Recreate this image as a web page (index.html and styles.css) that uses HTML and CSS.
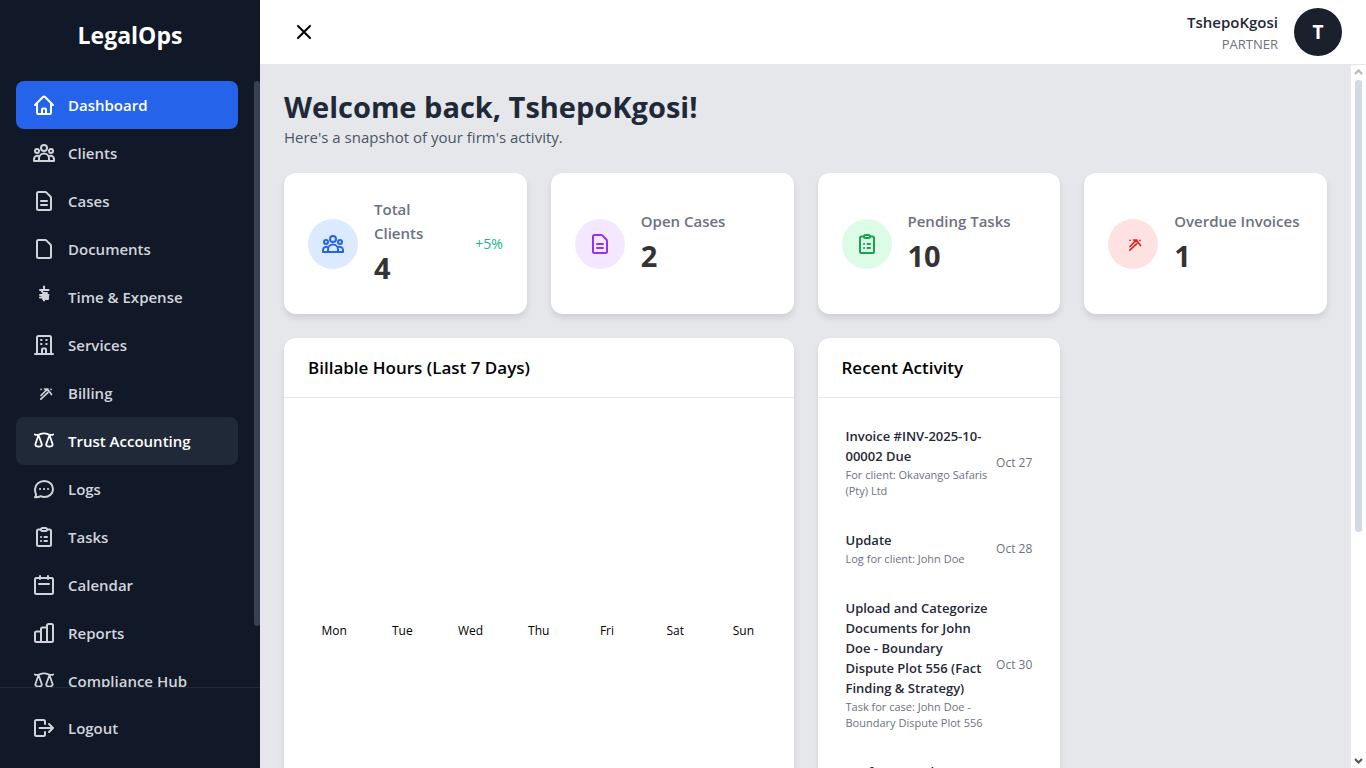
FILE: index.html
```html
<!DOCTYPE html>
<html lang="en">
<head>
  <meta charset="UTF-8">
  <title>LegalOps</title>
  <meta name="viewport" content="width=device-width, initial-scale=1.0">
  <link rel="stylesheet" href="styles.css">
</head>
<body>

<svg class="sprite" aria-hidden="true">
  <symbol id="i-home" viewBox="0 0 24 24"><path d="M3 12 11.200 3.800a1.100 1.100 0 0 1 1.600 0L21 12M5 10.500V20a1 1 0 0 0 1 1h12a1 1 0 0 0 1-1v-9.500M10 21v-4.500a1 1 0 0 1 1-1h2a1 1 0 0 1 1 1V21"/></symbol>
  <symbol id="i-users" viewBox="0 0 24 24"><circle cx="12" cy="7" r="3"/><circle cx="5" cy="10" r="2"/><circle cx="19" cy="10" r="2"/><path d="M7 20v-2.500a5 5 0 0 1 10 0V20M7.200 15.300A3.400 3.400 0 0 0 2 18v2h20v-2a3.400 3.400 0 0 0-5.200-2.700"/></symbol>
  <symbol id="i-case" viewBox="0 0 24 24"><path d="M6.500 3h6.600a2 2 0 0 1 1.400.6l3.900 3.900a2 2 0 0 1 .6 1.400v10.600a1.500 1.500 0 0 1-1.500 1.500h-11a1.500 1.500 0 0 1-1.500-1.500v-15A1.500 1.500 0 0 1 6.500 3ZM9 12h6M9 16h6"/></symbol>
  <symbol id="i-doc" viewBox="0 0 24 24"><path d="M6.500 3h6.600a2 2 0 0 1 1.400.6l3.900 3.900a2 2 0 0 1 .6 1.400v10.600a1.500 1.500 0 0 1-1.500 1.500h-11a1.500 1.500 0 0 1-1.500-1.500v-15A1.500 1.500 0 0 1 6.500 3Z"/></symbol>
  <symbol id="i-time" viewBox="0 0 24 24"><path d="M12 1.500v2M8 5h8.500M9.500 5.500l1.500 2.500h4M8 10h8.500M8 12.500h2M10 10.500h6v3.500h-5M10.500 12.500h4M12 13v2.500M15.500 14h-2"/></symbol>
  <symbol id="i-building" viewBox="0 0 24 24"><path d="M3 21h18M5 21V4.500A1.500 1.500 0 0 1 6.500 3h11A1.500 1.500 0 0 1 19 4.500V21M10 21v-4.500a1 1 0 0 1 1-1h2a1 1 0 0 1 1 1V21M9 7h.5M14.200 7h.5M9 11h.5M14.200 11h.5"/></symbol>
  <symbol id="i-billing" viewBox="0 0 24 24"><path stroke-width="1.700" d="m8.800 18.200 7-6.500M9 14.500l4.500-4.500M12.500 8h3.500M13.500 9.500h3l3 4M9 8.300h.1M19 8.300h.1"/></symbol>
  <symbol id="i-scale" viewBox="0 0 24 24"><path stroke-width="1.800" d="M2.800 5.500c1.600.8 3.200.5 4.800-.2 2.600-1 6.200-1 8.800 0 1.600.7 3.200 1 4.800.2M6.500 6 3.300 15.500c.2 2.700 6.400 2.700 6.600 0L6.500 6M17.500 6l-3.400 9.500c.2 2.700 6.400 2.700 6.600 0L17.500 6"/></symbol>
  <symbol id="i-chat" viewBox="0 0 24 24"><path d="M12.300 4c4.900 0 8.700 3.500 8.700 8s-3.800 8-8.700 8c-1.400 0-2.700-.3-3.800-.8-1.700 1-3.500 1.300-5.500 1 .9-1 1.200-1.700 1-2.900C3.200 15.800 3 14 3 12c.3-4.500 4.400-8 9.300-8ZM8 12h.1M12 12h.1M16 12h.1"/></symbol>
  <symbol id="i-task" viewBox="0 0 24 24"><path d="M8.300 4.500H6.500A1.500 1.500 0 0 0 5 6v13.500A1.500 1.500 0 0 0 6.500 21h11a1.500 1.500 0 0 0 1.500-1.500V6a1.500 1.500 0 0 0-1.500-1.500h-1.800M9 12h.1M12.500 12H15M9 16h.1M12.500 16H15"/><rect x="9" y="3" width="6" height="3" rx="1.500"/></symbol>
  <symbol id="i-calendar" viewBox="0 0 24 24"><rect x="3" y="5" width="18" height="16" rx="1.500"/><path d="M8 3v3M16 3v3M7 11h10"/></symbol>
  <symbol id="i-chart" viewBox="0 0 24 24"><path d="M9 21V8a1.500 1.500 0 0 1 1.500-1.500H15M9 10.500H4.500A1.500 1.500 0 0 0 3 12v7.500A1.500 1.500 0 0 0 4.500 21h15a1.500 1.500 0 0 0 1.500-1.500v-15A1.500 1.500 0 0 0 19.500 3h-3A1.500 1.500 0 0 0 15 4.500V21"/></symbol>
  <symbol id="i-logout" viewBox="0 0 24 24"><path d="M13 8V5.500A1.500 1.500 0 0 0 11.500 4h-7A1.500 1.500 0 0 0 3 5.500v13A1.500 1.500 0 0 0 4.500 20h7a1.500 1.500 0 0 0 1.500-1.500V16M7.500 12H21M17 8l4 4-4 4"/></symbol>
  <symbol id="i-close" viewBox="0 0 24 24"><path d="M6 6l12 12M18 6 6 18"/></symbol>
</svg>

<div class="app">
  <aside class="sidebar">
    <div class="brand">LegalOps</div>
    <div class="nav-wrap">
      <nav class="nav">
        <a href="#" class="nav-item active"><svg class="icon"><use href="#i-home"/></svg>Dashboard</a>
        <a href="#" class="nav-item"><svg class="icon"><use href="#i-users"/></svg>Clients</a>
        <a href="#" class="nav-item"><svg class="icon"><use href="#i-case"/></svg>Cases</a>
        <a href="#" class="nav-item"><svg class="icon"><use href="#i-doc"/></svg>Documents</a>
        <a href="#" class="nav-item"><svg class="icon"><use href="#i-time"/></svg>Time &amp; Expense</a>
        <a href="#" class="nav-item"><svg class="icon"><use href="#i-building"/></svg>Services</a>
        <a href="#" class="nav-item"><svg class="icon"><use href="#i-billing"/></svg>Billing</a>
        <a href="#" class="nav-item hovered"><svg class="icon"><use href="#i-scale"/></svg>Trust Accounting</a>
        <a href="#" class="nav-item"><svg class="icon"><use href="#i-chat"/></svg>Logs</a>
        <a href="#" class="nav-item"><svg class="icon"><use href="#i-task"/></svg>Tasks</a>
        <a href="#" class="nav-item"><svg class="icon"><use href="#i-calendar"/></svg>Calendar</a>
        <a href="#" class="nav-item"><svg class="icon"><use href="#i-chart"/></svg>Reports</a>
        <a href="#" class="nav-item"><svg class="icon"><use href="#i-scale"/></svg>Compliance Hub</a>
      </nav>
      <div class="nav-scroll"><div class="nav-thumb"></div></div>
    </div>
    <div class="sidebar-footer">
      <button type="button" class="nav-item"><svg class="icon"><use href="#i-logout"/></svg>Logout</button>
    </div>
  </aside>

  <div class="page">
    <header class="topbar">
      <button type="button" class="toggle" aria-label="Close menu"><svg class="icon"><use href="#i-close"/></svg></button>
      <div class="user">
        <div class="user-text">
          <div class="user-name">TshepoKgosi</div>
          <div class="user-role">PARTNER</div>
        </div>
        <div class="avatar">T</div>
      </div>
    </header>

    <div class="body">
      <main class="content">
        <h1>Welcome back, TshepoKgosi!</h1>
        <p class="subtitle">Here's a snapshot of your firm's activity.</p>

        <div class="grid">
          <section class="card stat">
            <div class="stat-icon blue"><svg class="icon"><use href="#i-users"/></svg></div>
            <div class="stat-text">
              <div class="stat-label">Total Clients</div>
              <div class="stat-value">4</div>
            </div>
            <div class="stat-change">+5%</div>
          </section>
          <section class="card stat">
            <div class="stat-icon purple"><svg class="icon"><use href="#i-case"/></svg></div>
            <div class="stat-text">
              <div class="stat-label">Open Cases</div>
              <div class="stat-value">2</div>
            </div>
          </section>
          <section class="card stat">
            <div class="stat-icon green"><svg class="icon"><use href="#i-task"/></svg></div>
            <div class="stat-text">
              <div class="stat-label">Pending Tasks</div>
              <div class="stat-value">10</div>
            </div>
          </section>
          <section class="card stat">
            <div class="stat-icon red"><svg class="icon"><use href="#i-billing"/></svg></div>
            <div class="stat-text">
              <div class="stat-label">Overdue Invoices</div>
              <div class="stat-value">1</div>
            </div>
          </section>

          <section class="card wide">
            <h2>Billable Hours (Last 7 Days)</h2>
            <div class="chart">
              <span>Mon</span><span>Tue</span><span>Wed</span><span>Thu</span><span>Fri</span><span>Sat</span><span>Sun</span>
            </div>
          </section>

          <section class="card">
            <h2>Recent Activity</h2>
            <ul class="activity">
              <li>
                <div class="activity-text">
                  <div class="activity-title">Invoice #INV-2025-10-00002 Due</div>
                  <div class="activity-sub">For client: Okavango Safaris (Pty) Ltd</div>
                </div>
                <time>Oct 27</time>
              </li>
              <li>
                <div class="activity-text">
                  <div class="activity-title">Update</div>
                  <div class="activity-sub">Log for client: John Doe</div>
                </div>
                <time>Oct 28</time>
              </li>
              <li>
                <div class="activity-text">
                  <div class="activity-title">Upload and Categorize Documents for John Doe - Boundary Dispute Plot 556 (Fact Finding &amp; Strategy)</div>
                  <div class="activity-sub">Task for case: John Doe - Boundary Dispute Plot 556</div>
                </div>
                <time>Oct 30</time>
              </li>
              <li>
                <div class="activity-text">
                  <div class="activity-title">Draft Research Memo</div>
                </div>
              </li>
            </ul>
          </section>
        </div>
      </main>

      <div class="scrollbar" aria-hidden="true">
        <svg class="arrow up" viewBox="0 0 9 6"><path d="M1 5l3.500-3.500L8 5"/></svg>
        <div class="thumb"></div>
        <svg class="arrow down" viewBox="0 0 9 6"><path d="M1 1l3.500 3.500L8 1"/></svg>
      </div>
    </div>
  </div>
</div>

</body>
</html>
```
FILE: styles.css
```css
* {
  box-sizing: border-box;
}

body {
  margin: 0;
  font-family: "Segoe UI", "Open Sans", "Noto Sans", sans-serif;
  font-size: 15px;
  line-height: 24px;
  background: #e5e7eb;
  color: #000;
}

h1, h2, p, ul {
  margin: 0;
  padding: 0;
}

button {
  border: 0;
  background: none;
  font: inherit;
  cursor: pointer;
}

.sprite {
  display: none;
}

.icon {
  width: 24px;
  height: 24px;
  flex: none;
  fill: none;
  stroke: currentColor;
  stroke-width: 2;
  stroke-linecap: round;
  stroke-linejoin: round;
}

.app {
  display: flex;
  height: 100vh;
  overflow: hidden;
}

/* sidebar */
.sidebar {
  width: 260px;
  flex: none;
  display: flex;
  flex-direction: column;
  background: #111827;
}

.brand {
  padding: 19px 16px 30px;
  font-size: 23px;
  line-height: 32px;
  font-weight: 700;
  color: #fff;
  text-align: center;
}

.nav-wrap {
  flex: 1;
  min-height: 0;
  display: flex;
}

.nav {
  flex: 1;
  padding: 0 16px;
  overflow: hidden;
}

.nav-scroll {
  width: 6px;
}

.nav-thumb {
  height: 90%;
  background: #374151;
  border-radius: 3px;
}

.nav-item {
  display: flex;
  align-items: center;
  gap: 12px;
  width: 100%;
  height: 48px;
  padding: 0 16px;
  border-radius: 8px;
  color: #d1d5db;
  font-weight: 600;
  text-decoration: none;
}

.nav-item.active {
  background: #2563eb;
  color: #fff;
}

.nav-item.hovered {
  background: #1f2937;
  color: #fff;
}

.sidebar-footer {
  padding: 16px;
  border-top: 1px solid #1f2937;
}

/* top bar */
.page {
  flex: 1;
  min-width: 0;
  display: flex;
  flex-direction: column;
}

.topbar {
  display: flex;
  justify-content: space-between;
  align-items: center;
  height: 65px;
  padding: 0 24px;
  background: #fff;
  border-bottom: 1px solid #e5e7eb;
}

.toggle {
  display: flex;
  padding: 8px;
}

.user {
  display: flex;
  align-items: center;
  gap: 16px;
  text-align: right;
}

.user-name {
  font-weight: 600;
  color: #1f2937;
}

.user-role {
  font-size: 13px;
  line-height: 20px;
  color: #6b7280;
}

.avatar {
  width: 48px;
  height: 48px;
  border-radius: 50%;
  background: #1a202c;
  color: #fff;
  font-size: 19px;
  font-weight: 700;
  line-height: 48px;
  text-align: center;
}

/* content */
.body {
  flex: 1;
  min-height: 0;
  display: flex;
}

.content {
  flex: 1;
  padding: 24px;
  overflow: hidden;
}

h1 {
  font-size: 29px;
  line-height: 36px;
  color: #1f2937;
}

.subtitle {
  margin-bottom: 24px;
  color: #4b5563;
}

.grid {
  display: grid;
  grid-template-columns: repeat(4, minmax(0, 1fr));
  gap: 24px;
}

.card {
  background: #fff;
  border-radius: 12px;
  box-shadow: 0 4px 6px rgba(0, 0, 0, 0.1);
}

.wide {
  grid-column: span 2;
}

.stat {
  display: flex;
  align-items: center;
  gap: 16px;
  min-height: 141px;
  padding: 24px;
}

.stat-icon {
  display: flex;
  align-items: center;
  justify-content: center;
  width: 50px;
  height: 50px;
  flex: none;
  border-radius: 50%;
}

.blue { background: #dbeafe; color: #2563eb; }
.purple { background: #f3e8ff; color: #9333ea; }
.green { background: #dcfce7; color: #16a34a; }
.red { background: #fee2e2; color: #dc2626; }

.stat-text {
  flex: 1;
}

.stat-label {
  font-weight: 600;
  color: #6b7280;
}

.stat-value {
  font-size: 29px;
  line-height: 45px;
  font-weight: 700;
  color: #333;
}

.stat-change {
  font-size: 14px;
  color: #10b981;
}

h2 {
  padding: 16px 24px;
  border-bottom: 1px solid #e5e7eb;
  font-size: 17px;
  line-height: 27px;
  font-weight: 600;
}

.chart {
  display: flex;
  align-items: flex-end;
  height: 260px;
  padding: 16px;
  font-size: 12px;
  line-height: 22px;
}

.chart span {
  flex: 1;
  text-align: center;
}

.activity {
  list-style: none;
  padding: 12px 24px;
}

.activity li {
  display: flex;
  align-items: center;
  justify-content: space-between;
  gap: 4px;
  padding: 16px 4px 15px;
}

.activity-title {
  font-size: 13px;
  line-height: 20px;
  font-weight: 600;
  color: #1f2937;
}

.activity-sub,
.activity time {
  font-size: 11px;
  line-height: 16px;
  color: #6b7280;
}

.activity-sub {
  margin-top: 1px;
}

.activity time {
  font-size: 12px;
  white-space: nowrap;
}

/* scrollbar */
.scrollbar {
  display: flex;
  flex-direction: column;
  align-items: center;
  width: 15px;
  padding: 4px 0;
  background: #fff;
}

.thumb {
  width: 7px;
  height: 65%;
  margin-top: 5px;
  border-radius: 3px;
  background: #d1dae3;
}

.arrow {
  width: 9px;
  height: 6px;
  flex: none;
  fill: none;
  stroke: #b5b5b5;
  stroke-width: 2;
}

.down {
  margin-top: auto;
  stroke: #555;
}
```
